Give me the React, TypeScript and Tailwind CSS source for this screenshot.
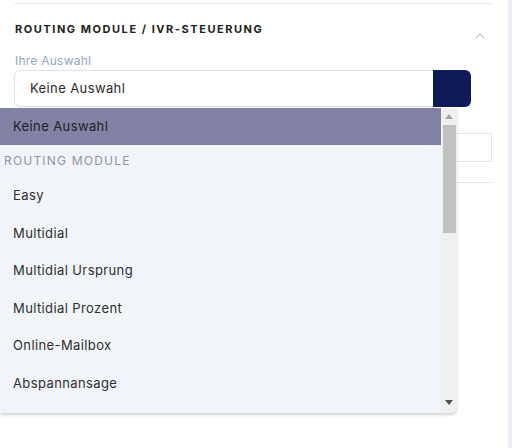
import { ChevronUp } from "lucide-react";

const OPTIONS = [
  "Easy",
  "Multidial",
  "Multidial Ursprung",
  "Multidial Prozent",
  "Online-Mailbox",
  "Abspannansage",
];

export default function App() {
  return (
    <div
      className="relative w-[512px] h-[448px] bg-white flex overflow-hidden text-[#2b2b2b]"
      style={{ fontFamily: "Inter, 'Noto Sans', sans-serif" }}
    >
      <div className="w-[508px] px-[14px]">
        <div className="mt-[3px] border-t border-[#e6e9ee] w-[478px]" />

        {/* Header */}
        <div className="flex items-start justify-between w-[478px] pt-[17px]">
          <h2 className="text-[11px] font-bold tracking-[0.14em] text-[#222] pl-[1px]">
            ROUTING MODULE / IVR-STEUERUNG
          </h2>
          <ChevronUp size={16} strokeWidth={1.5} className="text-[#a6a9ae] mt-[7px] mr-[4px]" />
        </div>

        <p className="text-[12px] text-[#92a6bf] mt-[11px] pl-[1px] leading-none tracking-[0.02em]">Ihre Auswahl</p>

        {/* Select */}
        <div className="flex mt-[3px] w-[457px] h-[37px]">
          <div className="flex-1 flex items-center border border-[#dde1e6] border-r-0 rounded-l-[6px] pl-[15px] text-[13px] tracking-[0.03em]">
            Keine Auswahl
          </div>
          <div className="w-[38px] bg-[#0d1c56] rounded-r-[6px]" />
        </div>

        {/* Background field behind the dropdown */}
        <div className="flex flex-col items-end w-[478px]">
          <div className="mt-[26px] w-[60px] h-[29px] border border-[#e3e6ea] bg-white" />
          <div className="mt-[20px] w-[60px] border-t border-[#e3e8ef]" />
        </div>
      </div>
      <div className="flex-1 bg-[#e9eef5]" />

      {/* Open dropdown list */}
      <div className="absolute left-0 top-[108px] w-[457px] h-[305px] bg-[#f1f5f9] rounded-br-[6px] shadow-[0_2px_3px_rgba(0,0,0,0.18)] flex overflow-hidden">
        <div className="flex-1 flex flex-col">
          <div className="h-[37px] bg-[#8182a4] flex items-center pl-[13px] text-[13px] tracking-[0.03em] text-[#1f1f2a]">
            Keine Auswahl
          </div>
          <div className="h-[32px] flex items-center pl-[4px] text-[12px] tracking-[0.1em] text-[#8b95a3]">
            ROUTING MODULE
          </div>
          {OPTIONS.map((o) => (
            <div key={o} className="h-[37.6px] flex items-center pl-[13px] text-[13px] tracking-[0.03em] text-[#2e2e2e]">
              {o}
            </div>
          ))}
        </div>
        {/* Scrollbar */}
        <div className="w-[16px] bg-[#f0f0f0] flex flex-col items-center">
          <div className="h-[17px] flex items-center justify-center">
            <svg width="8" height="5" viewBox="0 0 8 5">
              <path d="M0 5 L4 0 L8 5 Z" fill="#a3a3a3" />
            </svg>
          </div>
          <div className="w-[13px] h-[108px] bg-[#c1c1c1]" />
          <div className="flex-1" />
          <div className="h-[17px] flex items-center justify-center mb-[2px]">
            <svg width="8" height="5" viewBox="0 0 8 5">
              <path d="M0 0 L8 0 L4 5 Z" fill="#505050" />
            </svg>
          </div>
        </div>
      </div>
    </div>
  );
}
